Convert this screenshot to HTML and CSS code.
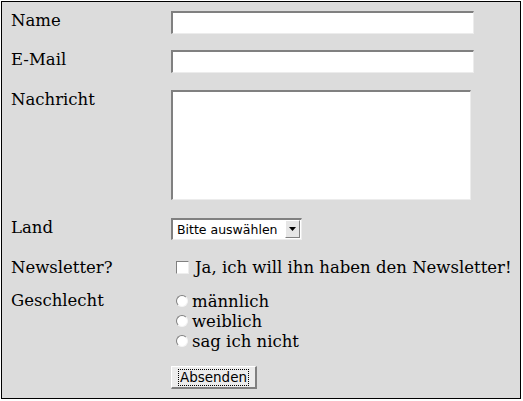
FILE: index.html
```html
<!DOCTYPE html>
<html lang="de">
<head>
<meta charset="utf-8">
<title>Kontakt</title>
<link rel="stylesheet" href="styles.css">
</head>
<body>
<form class="form">
  <div class="row row-name">
    <label class="lbl" for="name">Name</label>
    <input class="txt" id="name" type="text">
  </div>
  <div class="row row-mail">
    <label class="lbl" for="mail">E-Mail</label>
    <input class="txt" id="mail" type="text">
  </div>
  <div class="row row-msg">
    <label class="lbl" for="msg">Nachricht</label>
    <textarea class="area" id="msg"></textarea>
  </div>
  <div class="row row-land">
    <label class="lbl" for="land">Land</label>
    <span class="sel">
      <span class="sel-text">Bitte auswählen</span>
      <span class="sel-btn"><svg width="7" height="4" viewBox="0 0 7 4"><path d="M0 0h7L3.5 4z" fill="#000"/></svg></span>
    </span>
  </div>
  <div class="row row-news">
    <span class="lbl">Newsletter?</span>
    <label class="opt"><span class="box"></span><span class="opt-text">Ja, ich will ihn haben den Newsletter!</span></label>
  </div>
  <div class="row row-sex">
    <span class="lbl">Geschlecht</span>
    <div class="radios">
      <label class="opt radio-opt"><span class="radio"></span><span class="opt-text">männlich</span></label>
      <label class="opt radio-opt"><span class="radio"></span><span class="opt-text">weiblich</span></label>
      <label class="opt radio-opt"><span class="radio"></span><span class="opt-text">sag ich nicht</span></label>
    </div>
  </div>
  <div class="row row-btn">
    <span class="lbl"></span>
    <button class="btn" type="button"><span class="btn-inner">Absenden</span></button>
  </div>
</form>
</body>
</html>
```
FILE: styles.css
```css
html, body {
  margin: 0;
  padding: 0;
  background: #ffffff;
}
.form {
  margin: 1px 0 0 1px;
  width: 509px;
  height: 387px;
  border: 1px solid #000;
  background: #dcdcdc;
  padding: 9px 0 0 9px;
  box-sizing: content-box;
  font-family: "DejaVu Serif", serif;
  font-size: 16.5px;
  color: #000;
  display: flex;
  flex-direction: column;
}
.row {
  display: flex;
  align-items: flex-start;
}
.lbl {
  width: 160px;
  flex: none;
  line-height: 19px;
}
.txt {
  box-sizing: border-box;
  width: 303px;
  height: 23px;
  margin: 0;
  padding: 0;
  background: #fff;
  border-top: 2px solid #808080;
  border-left: 2px solid #808080;
  border-bottom: 1px solid #ececec;
  border-right: 1px solid #ececec;
  outline: none;
}
.row-mail { margin-top: 16px; }
.row-msg { margin-top: 17px; }
.area {
  box-sizing: border-box;
  width: 300px;
  height: 110px;
  margin: 0;
  padding: 0;
  resize: none;
  background: #fff;
  border-top: 2px solid #808080;
  border-left: 2px solid #808080;
  border-bottom: 1px solid #ececec;
  border-right: 1px solid #ececec;
  outline: none;
}
.row-land { margin-top: 18px; }
.row-land .lbl { padding-top: 0; }
.sel {
  position: relative;
  box-sizing: border-box;
  width: 131px;
  height: 22px;
  background: #fff;
  border-top: 2px solid #808080;
  border-left: 2px solid #808080;
  border-bottom: 1px solid #ececec;
  border-right: 1px solid #ececec;
  font-family: "DejaVu Sans", sans-serif;
  font-size: 12.5px;
  line-height: 19px;
  padding-left: 4px;
}
.sel-text { display: block; }
.sel-btn {
  position: absolute;
  right: 1px;
  top: 0;
  box-sizing: border-box;
  width: 15px;
  height: 18px;
  background: #e6e6e6;
  border-top: 1px solid #fff;
  border-left: 1px solid #fff;
  border-bottom: 1px solid #808080;
  border-right: 1px solid #808080;
  display: flex;
  align-items: center;
  justify-content: center;
}
.row-news { margin-top: 18px; }
.opt {
  display: flex;
  align-items: center;
  line-height: 19px;
}
.box {
  box-sizing: border-box;
  width: 13px;
  height: 13px;
  margin: 0 6px 0 5px;
  background: #fff;
  border-top: 1px solid #808080;
  border-left: 1px solid #808080;
  border-bottom: 1px solid #eee;
  border-right: 1px solid #eee;
}
.row-sex { margin-top: 14px; }
.radios {
  display: flex;
  flex-direction: column;
  padding-top: 0;
}
.radio-opt { height: 20px; }
.radio {
  box-sizing: border-box;
  width: 12px;
  height: 12px;
  margin: 0 4px 0 5px;
  border-radius: 50%;
  background: #fff;
  border-top: 1px solid #808080;
  border-left: 1px solid #808080;
  border-bottom: 1px solid #f4f4f4;
  border-right: 1px solid #f4f4f4;
}
.row-btn { margin-top: 15px; }
.btn {
  box-sizing: border-box;
  width: 86px;
  height: 23px;
  margin: 0;
  padding: 2px 3px;
  background: #ececec;
  border-top: 1px solid #fff;
  border-left: 1px solid #fff;
  border-bottom: 2px solid #808080;
  border-right: 2px solid #808080;
  font-family: "DejaVu Sans", sans-serif;
  font-size: 13.5px;
  color: #000;
  display: flex;
  align-items: center;
  justify-content: center;
}
.btn-inner {
  border: 1px dotted #000;
  padding: 0 1px;
  line-height: 15px;
}
```
